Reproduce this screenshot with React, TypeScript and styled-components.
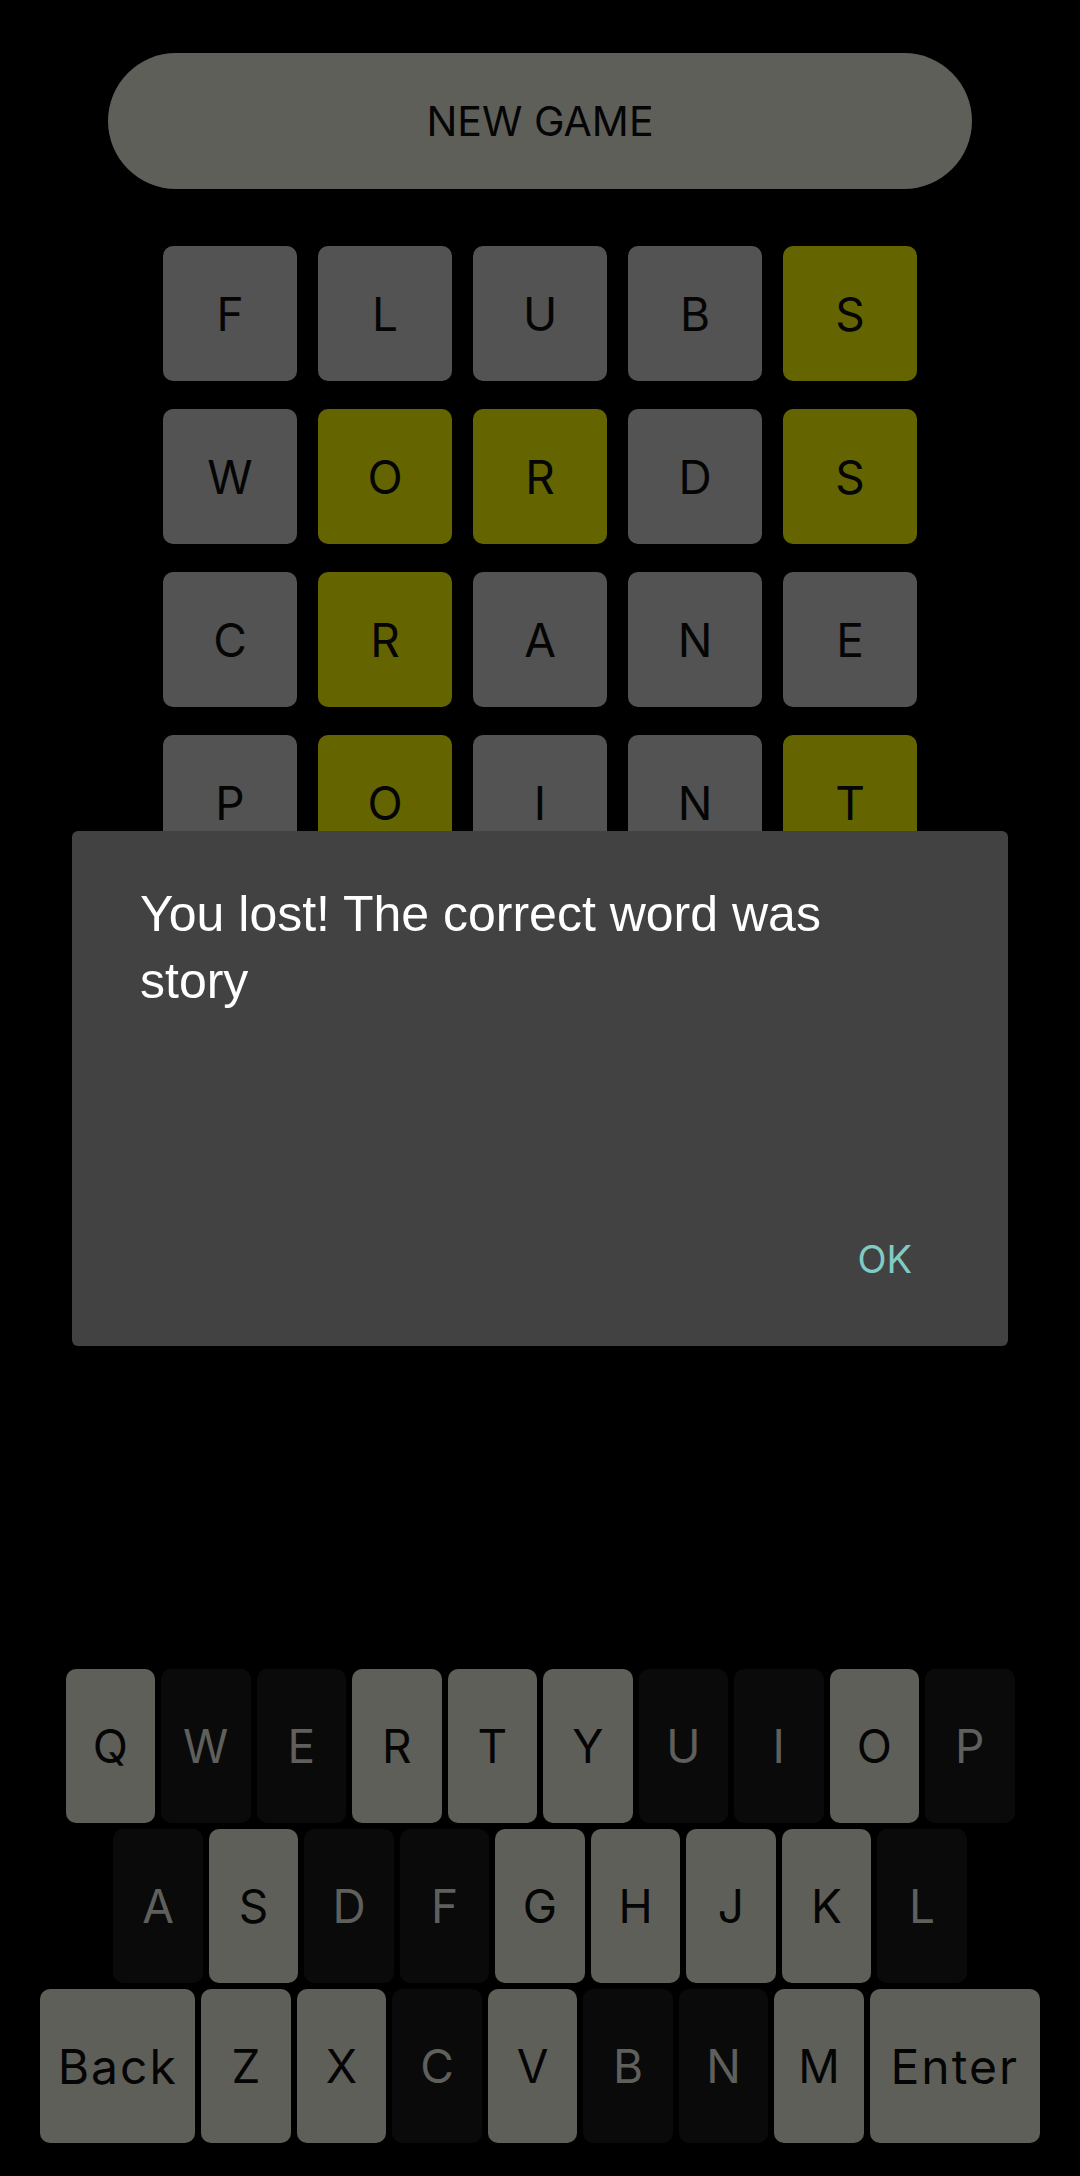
import React from "react";
import styled, { createGlobalStyle } from "styled-components";

const GlobalStyle = createGlobalStyle`
  html, body {
    margin: 0;
    padding: 0;
    background: #000;
  }
  body {
    font-family: "Inter", "Roboto", sans-serif;
  }
`;

const Page = styled.div`
  position: relative;
  height: 2176px;
  display: flex;
  flex-direction: column;
  align-items: center;
  background: #000;
  overflow: hidden;
`;

const NewGameButton = styled.button`
  margin-top: 53px;
  width: 864px;
  height: 136px;
  border: none;
  border-radius: 68px;
  background: #5f5f5a;
  color: #050505;
  font-family: "Inter", sans-serif;
  font-size: 41px;
  font-weight: 400;
  text-transform: uppercase;
  padding: 0;
`;

const Board = styled.div`
  margin-top: 57px;
  display: flex;
  flex-direction: column;
  gap: 28px;
`;

const BoardRow = styled.div`
  display: flex;
  gap: 21px;
`;

type TileState = "absent" | "present" | "empty";

const Tile = styled.div<{ $state: TileState }>`
  width: 134px;
  height: 135px;
  border-radius: 10px;
  display: flex;
  align-items: center;
  justify-content: center;
  background: ${(p) => (p.$state === "present" ? "#646400" : p.$state === "absent" ? "#535353" : "#1a1a1a")};
  color: #050505;
  font-family: "Inter", sans-serif;
  font-size: 46px;
  font-weight: 400;
`;

const Keyboard = styled.div`
  margin-top: auto;
  margin-bottom: 33px;
  display: flex;
  flex-direction: column;
  align-items: center;
  gap: 6px;
`;

const KeyRow = styled.div`
  display: flex;
  gap: 6px;
`;

const Key = styled.button<{ $used: boolean; $width?: number }>`
  width: ${(p) => p.$width ?? 89.5}px;
  height: 154px;
  padding: 0;
  border: none;
  border-radius: 10px;
  background: ${(p) => (p.$used ? "#5f5f5a" : "#0a0a0a")};
  color: ${(p) => (p.$used ? "#050505" : "#5f5f5c")};
  font-family: "Inter", sans-serif;
  font-size: ${(p) => (p.$width ? 48 : 46)}px;
  letter-spacing: ${(p) => (p.$width ? "2px" : "0")};
  font-weight: 400;
  display: flex;
  align-items: center;
  justify-content: center;
`;

const Dialog = styled.div`
  position: absolute;
  top: 831px;
  left: 72px;
  width: 936px;
  height: 515px;
  box-sizing: border-box;
  background: #424242;
  border-radius: 6px;
  display: flex;
  flex-direction: column;
  padding: 50px 96px 64px 68px;
`;

const Message = styled.p`
  margin: 0;
  color: #ffffff;
  font-family: "Liberation Sans", Arial, sans-serif;
  font-size: 50px;
  line-height: 67px;
`;

const Actions = styled.div`
  margin-top: auto;
  display: flex;
  justify-content: flex-end;
`;

const OkButton = styled.button`
  border: none;
  background: none;
  padding: 0;
  color: #80cbc4;
  font-family: "Inter", sans-serif;
  font-size: 38px;
  font-weight: 400;
  line-height: 46px;
`;

const guesses: { word: string; marks: TileState[] }[] = [
  { word: "FLUBS", marks: ["absent", "absent", "absent", "absent", "present"] },
  { word: "WORDS", marks: ["absent", "present", "present", "absent", "present"] },
  { word: "CRANE", marks: ["absent", "present", "absent", "absent", "absent"] },
  { word: "POINT", marks: ["absent", "present", "absent", "absent", "present"] },
  { word: "     ", marks: ["empty", "empty", "empty", "empty", "empty"] },
  { word: "     ", marks: ["empty", "empty", "empty", "empty", "empty"] },
];

const usedKeys = new Set(["Q", "R", "T", "Y", "O", "S", "G", "H", "J", "K", "Z", "X", "V", "M", "Back", "Enter"]);

const keyRows = [
  ["Q", "W", "E", "R", "T", "Y", "U", "I", "O", "P"],
  ["A", "S", "D", "F", "G", "H", "J", "K", "L"],
  ["Back", "Z", "X", "C", "V", "B", "N", "M", "Enter"],
];

const wideKeys: Record<string, number> = { Back: 155, Enter: 170 };

export default function App() {
  return (
    <>
      <GlobalStyle />
      <Page>
        <NewGameButton>New Game</NewGameButton>
        <Board>
          {guesses.map((g, i) => (
            <BoardRow key={i}>
              {g.word.split("").map((ch, j) => (
                <Tile key={j} $state={g.marks[j]}>
                  {ch.trim()}
                </Tile>
              ))}
            </BoardRow>
          ))}
        </Board>
        <Keyboard>
          {keyRows.map((row, i) => (
            <KeyRow key={i}>
              {row.map((k) => (
                <Key key={k} $used={usedKeys.has(k)} $width={wideKeys[k]}>
                  {k}
                </Key>
              ))}
            </KeyRow>
          ))}
        </Keyboard>
        <Dialog>
          <Message>You lost! The correct word was story</Message>
          <Actions>
            <OkButton>OK</OkButton>
          </Actions>
        </Dialog>
      </Page>
    </>
  );
}
